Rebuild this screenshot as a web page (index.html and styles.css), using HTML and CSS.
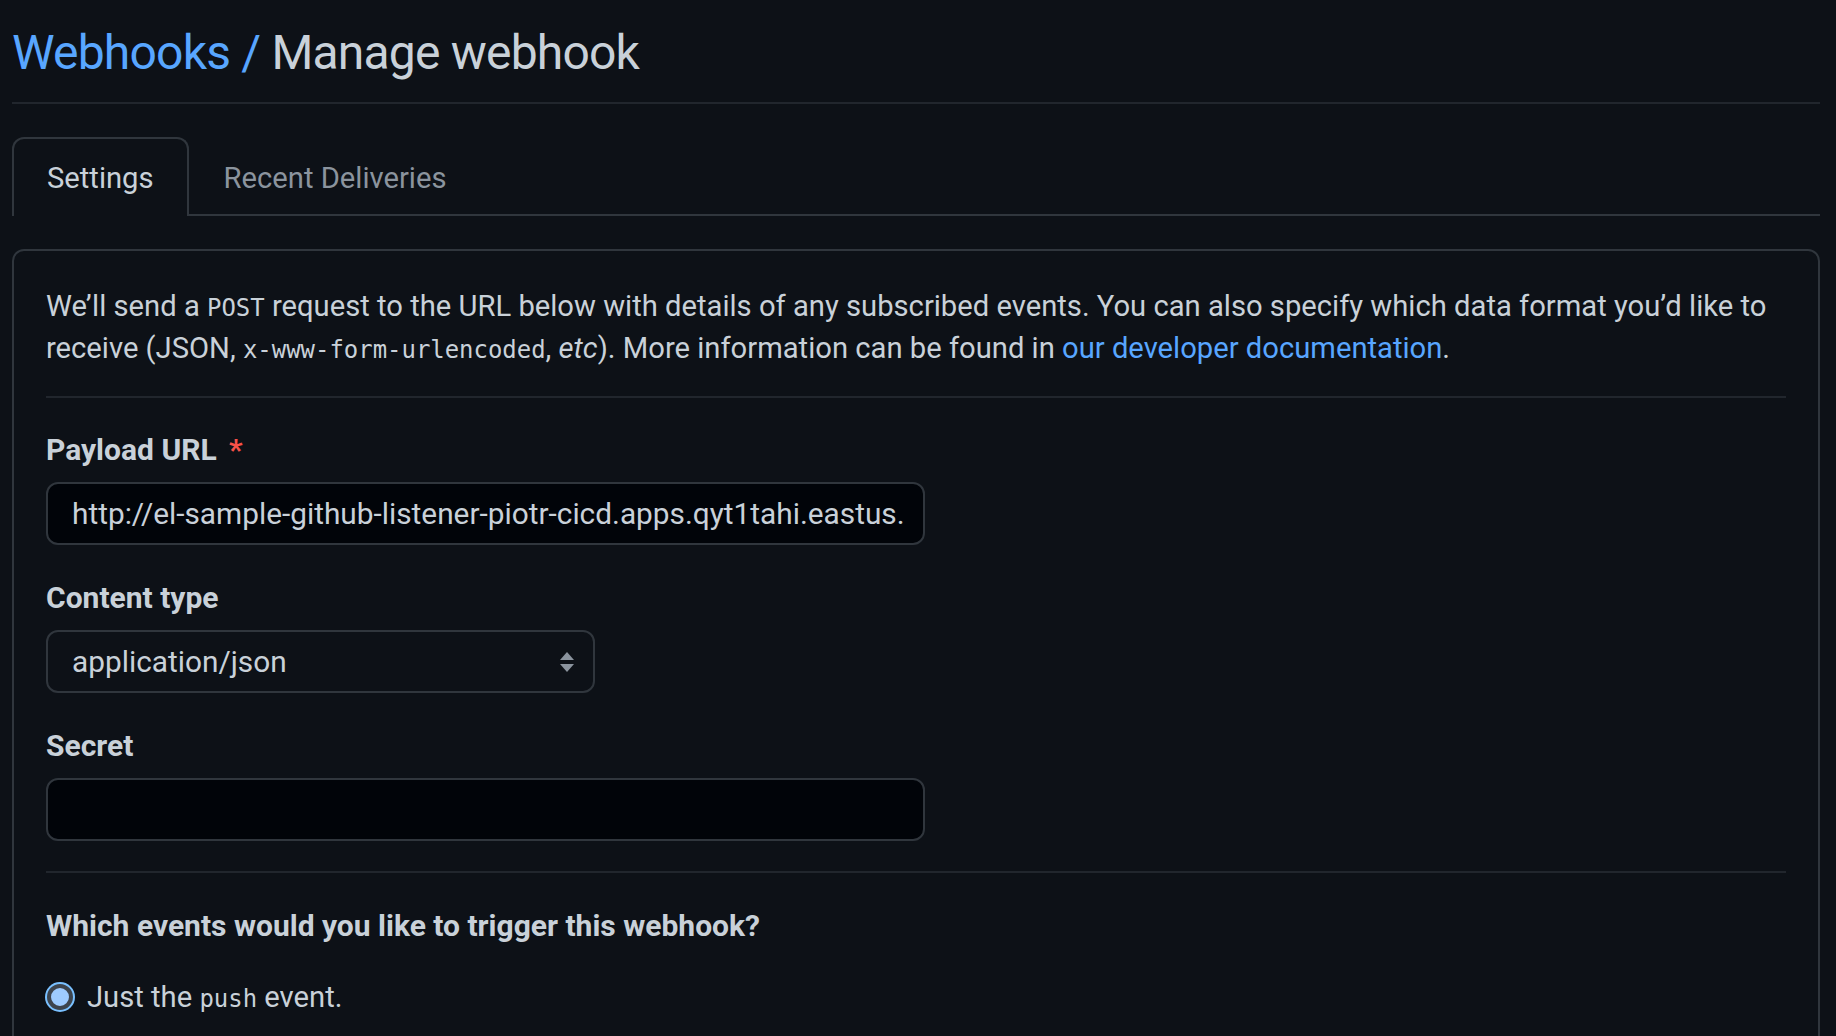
FILE: index.html
```html
<!DOCTYPE html>
<html lang="en">
<head>
<meta charset="utf-8">
<title>Manage webhook</title>
<link rel="stylesheet" href="styles.css">
</head>
<body>
<div class="page">
  <h2 class="title"><a class="crumb" href="#">Webhooks</a><span class="sep"> / </span><span class="current">Manage webhook</span></h2>

  <nav class="tabnav">
    <a class="tab selected" href="#">Settings</a>
    <a class="tab" href="#">Recent Deliveries</a>
  </nav>

  <div class="box">
    <p class="intro">We’ll send a <code>POST</code> request to the URL below with details of any subscribed events. You can also specify which data format you’d like to receive (JSON, <code>x-www-form-urlencoded</code>, <em>etc</em>). More information can be found in <a class="link" href="#">our developer documentation</a>.</p>

    <div class="fields">
      <div class="field">
        <label class="label">Payload URL <span class="req">*</span></label>
        <div class="input">http://el-sample-github-listener-piotr-cicd.apps.qyt1tahi.eastus.</div>
      </div>
      <div class="field">
        <label class="label">Content type</label>
        <div class="select">
          <span>application/json</span>
          <svg class="arrows" width="16" height="22" viewBox="0 0 16 22"><path d="M8 1 L15 9 L1 9 Z" fill="#8b949e"/><path d="M1 13 L15 13 L8 21 Z" fill="#8b949e"/></svg>
        </div>
      </div>
      <div class="field">
        <label class="label">Secret</label>
        <div class="input"></div>
      </div>
    </div>

    <div class="events">
      <h3 class="events-title">Which events would you like to trigger this webhook?</h3>
      <div class="radio-row">
        <span class="radio"></span>
        <span>Just the <code>push</code> event.</span>
      </div>
    </div>
  </div>
</div>
</body>
</html>
```

FILE: styles.css
```css
html, body {
  margin: 0;
  padding: 0;
  background: #0d1117;
  height: 100%;
  overflow: hidden;
}
body {
  font-family: Roboto, Inter, "Liberation Sans", sans-serif;
  color: #c9d1d9;
  font-size: 29.2px;
}
.page {
  padding: 0 16px 0 12px;
}
.title {
  margin: 0;
  padding: 19px 0 16px;
  font-size: 48px;
  letter-spacing: -0.8px;
  font-weight: 400;
  line-height: 1.4;
  border-bottom: 2px solid #21262d;
}
.crumb, .sep {
  color: #58a6ff;
  text-decoration: none;
}
.current { color: #c9d1d9; }

.tabnav {
  display: flex;
  margin-top: 33px;
  border-bottom: 2px solid #30363d;
}
.tab {
  display: block;
  padding: 0 33px;
  height: 77px;
  line-height: 78px;
  color: #8b949e;
  text-decoration: none;
  border: 2px solid transparent;
  border-bottom: 0;
  border-radius: 12px 12px 0 0;
  margin-bottom: -2px;
}
.tab.selected {
  color: #c9d1d9;
  border-color: #30363d;
  background: #0d1117;
}

.box {
  margin-top: 33px;
  border: 2px solid #30363d;
  border-radius: 12px;
  padding: 0 32px;
  height: 900px;
}
.intro {
  margin: 0;
  padding: 34px 0 27px;
  line-height: 42px;
  border-bottom: 2px solid #21262d;
}
code {
  font-family: "DejaVu Sans Mono", "Liberation Mono", monospace;
  font-size: 0.82em;
  line-height: 1;
}
.link { color: #58a6ff; text-decoration: none; }

.fields {
  padding: 32px 0 30px;
  border-bottom: 2px solid #21262d;
  display: flex;
  flex-direction: column;
  gap: 33px;
}
.field {
  display: flex;
  flex-direction: column;
  gap: 12px;
}
.label {
  font-weight: 700;
  font-size: 30px;
  line-height: 40px;
}
.req { color: #f85149; margin-left: 5px; }
.input {
  box-sizing: border-box;
  width: 879px;
  height: 63px;
  background: #010409;
  border: 2px solid #30363d;
  border-radius: 12px;
  padding: 0 24px;
  line-height: 59px;
  font-size: 29.8px;
  white-space: nowrap;
  overflow: hidden;
}
.select {
  box-sizing: border-box;
  width: 549px;
  height: 63px;
  border: 2px solid #30363d;
  border-radius: 12px;
  padding: 0 18px 0 24px;
  display: flex;
  align-items: center;
  justify-content: space-between;
  font-size: 29.8px;
}
.events {
  padding: 26px 0 0;
}
.events-title {
  margin: 0;
  font-size: 30px;
  font-weight: 700;
  line-height: 54px;
}
.radio-row {
  margin-top: 27px;
  display: flex;
  align-items: center;
  gap: 14px;
}
.radio {
  box-sizing: border-box;
  width: 26px;
  height: 26px;
  border-radius: 50%;
  background: #9ecbff;
  border: 4px solid #3d444d;
  box-shadow: 0 0 0 2px #79c0ff;
  margin-left: 1px;
}
```
